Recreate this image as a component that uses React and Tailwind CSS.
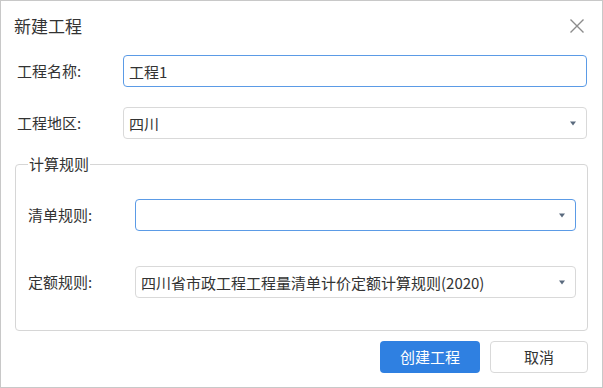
const font = { fontFamily: '"Noto Sans CJK SC", "Noto Sans", sans-serif' };

function Caret() {
  return (
    <svg width="8" height="5" viewBox="0 0 8 5" className="shrink-0">
      <path d="M1 0.5h6L4 4.5z" fill="#5a6a7e" />
    </svg>
  );
}

function CloseIcon() {
  return (
    <svg width="16" height="16" viewBox="0 0 16 16">
      <path d="M1.5 1.5l13 13M14.5 1.5l-13 13" stroke="#8c8c8c" strokeWidth="1.4" fill="none" />
    </svg>
  );
}

function Field({ value, active, select, className = "" }) {
  return (
    <div
      className={[
        "flex h-[32px] items-center justify-between rounded-[4px] border bg-white pl-[5px] pr-[9px] text-[15px] text-[#333]",
        active ? "border-[#5b9be6]" : "border-[#d9d9d9]",
        className,
      ].join(" ")}
    >
      <span className="leading-none">{value}</span>
      {select && <Caret />}
    </div>
  );
}

export default function App() {
  return (
    <div
      className="flex h-[388px] w-[603px] flex-col border border-[#c8c8c8] bg-white text-[#333]"
      style={font}
    >
      {/* Header */}
      <div className="flex h-[50px] items-center justify-between pl-[13px] pr-[17px]">
        <span className="text-[17px]">新建工程</span>
        <CloseIcon />
      </div>

      {/* Top rows */}
      <div className="flex flex-col gap-[20px] pl-[16px] pr-[15px] pt-[4px]">
        <div className="flex items-center">
          <span className="w-[106px] text-[15px]">工程名称:</span>
          <Field value="工程1" active className="flex-1" />
        </div>
        <div className="flex items-center">
          <span className="w-[106px] text-[15px]">工程地区:</span>
          <Field value="四川" select className="flex-1" />
        </div>
      </div>

      {/* Fieldset */}
      <fieldset className="mx-[14px] mt-[17px] h-[175px] rounded-[4px] border border-[#d6d6d6] px-[11px] pb-0">
        <legend className="ml-[1px] px-[1px] text-[15px] leading-[16px]">计算规则</legend>
        <div className="flex flex-col gap-[35px] pt-[27px]">
          <div className="flex items-center">
            <span className="w-[108px] pl-[1px] text-[15px]">清单规则:</span>
            <Field value="" active select className="flex-1" />
          </div>
          <div className="flex items-center">
            <span className="w-[108px] pl-[1px] text-[15px]">定额规则:</span>
            <Field value="四川省市政工程工程量清单计价定额计算规则(2020)" select className="flex-1" />
          </div>
        </div>
      </fieldset>

      {/* Footer */}
      <div className="flex justify-end gap-[10px] pr-[14px] pt-[10px]">
        <button className="h-[32px] w-[100px] rounded-[4px] bg-[#2f80e1] text-[15px] text-white">
          创建工程
        </button>
        <button className="h-[32px] w-[98px] rounded-[4px] border border-[#d9d9d9] bg-white text-[15px] text-[#333]">
          取消
        </button>
      </div>
    </div>
  );
}
